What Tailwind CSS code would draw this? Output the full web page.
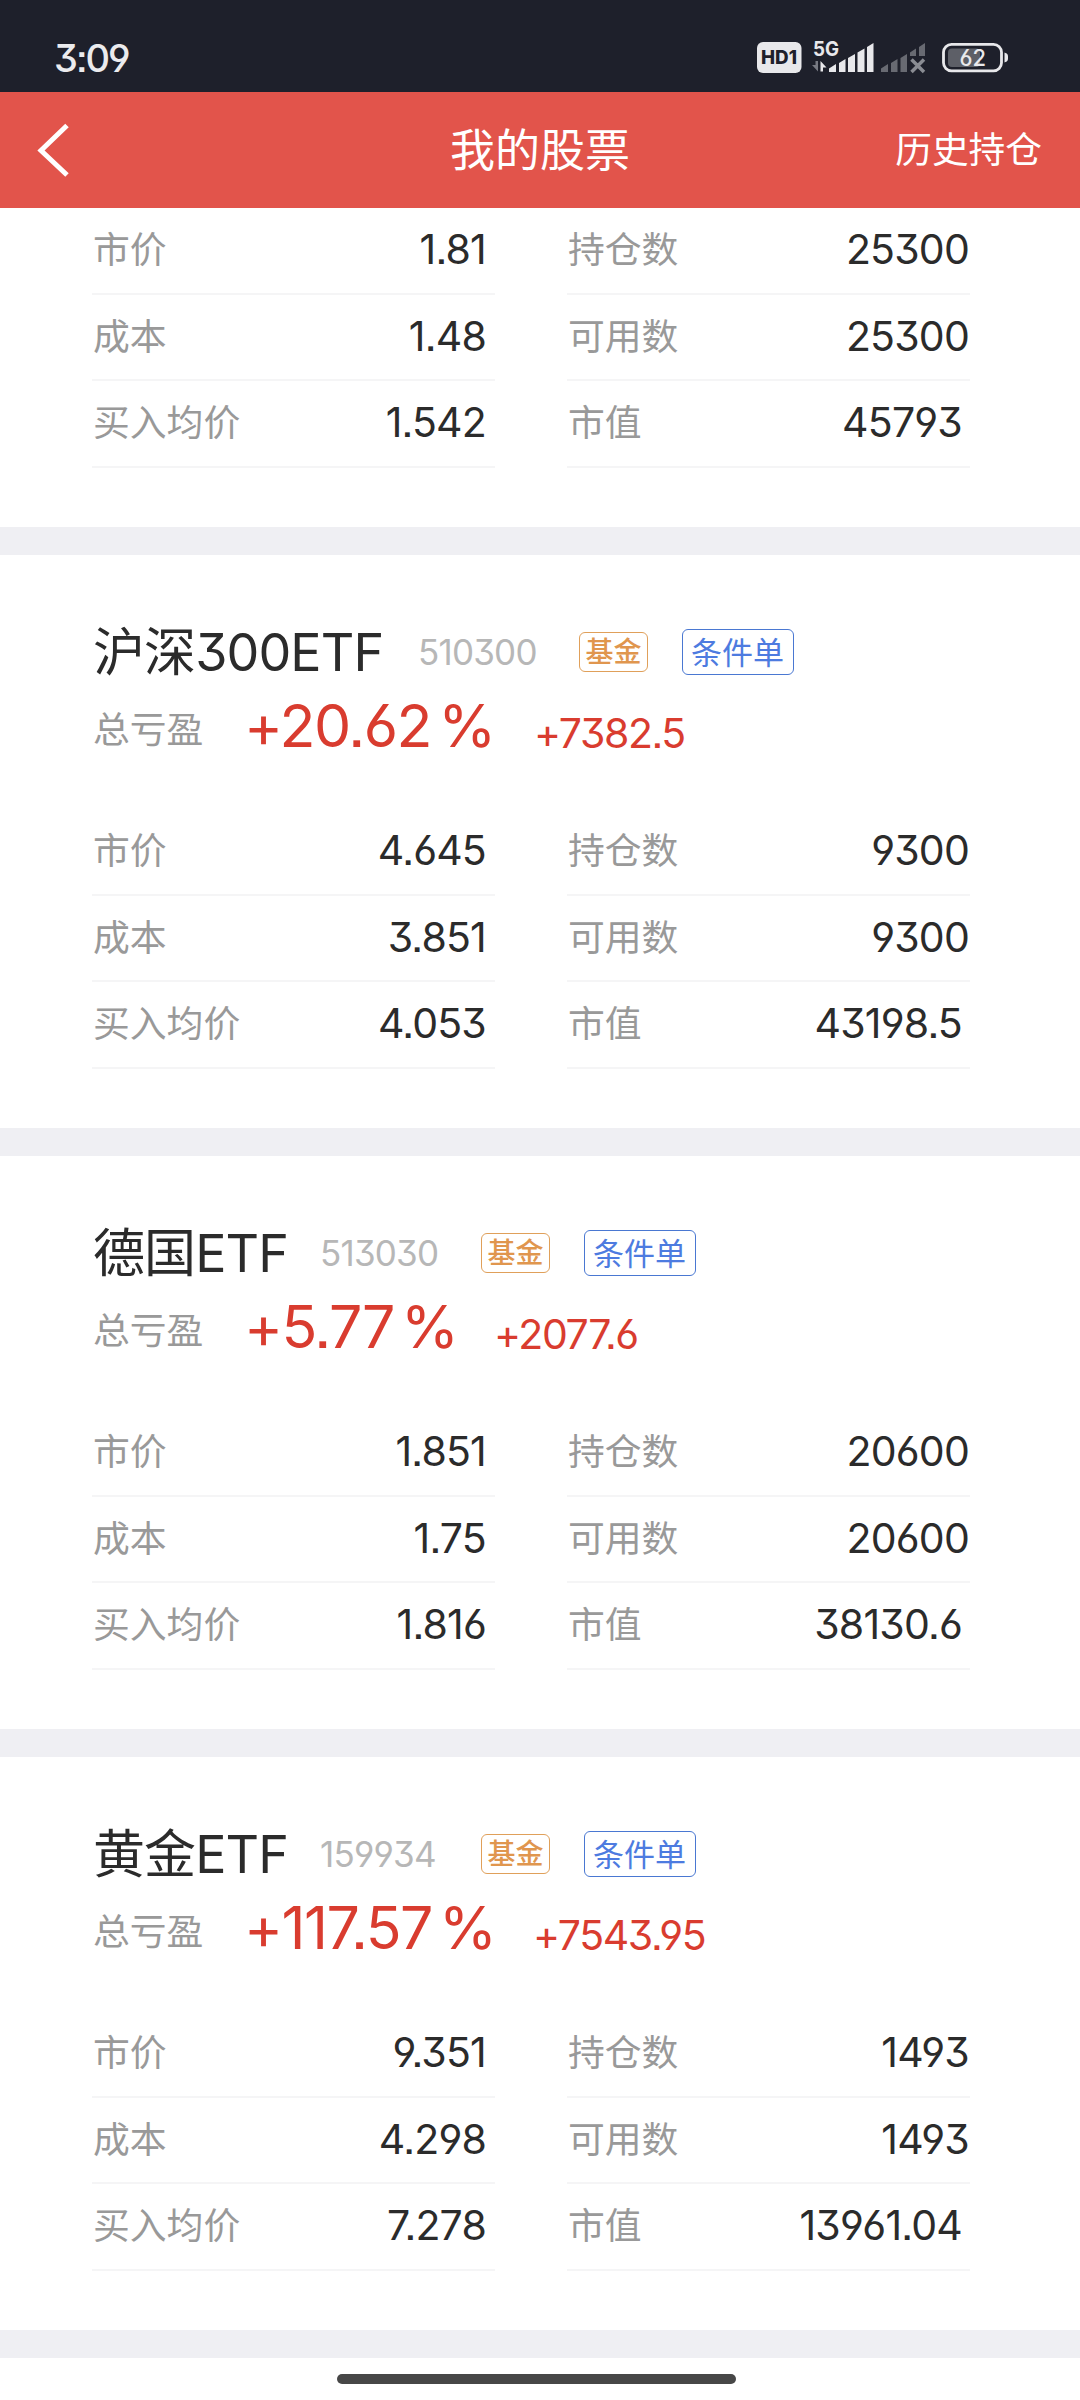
<!DOCTYPE html>
<html lang="zh-CN">
<head>
    <meta charset="UTF-8">
    <meta name="viewport" content="width=device-width, initial-scale=1.0">
    <title>我的股票</title>
    <script src="https://cdn.jsdelivr.net/npm/@tailwindcss/browser@4"></script>
</head>
<body class="w-[1080px] h-[2400px] overflow-hidden bg-white text-[#2b2b2b] font-[Inter,'Noto_Sans_CJK_SC',sans-serif] [font-feature-settings:'cv03','cv04','cv09','ss07']">
    <div class="relative flex flex-col h-[2400px]">
        <!-- status bar -->
        <div class="h-[92px] shrink-0 bg-[#1e202b] flex justify-between pl-[54px]">
            <span class="mt-[36px] leading-[44px] text-[38px] font-medium tracking-[-2px] text-[#ebebee]">3:09</span>
            <svg class="w-[330px] h-[92px]" viewBox="750 0 330 92" fill="#e8e8eb">
                <rect x="757" y="42" width="44.500" height="31" rx="6"/>
                <text x="761" y="64" font-size="19" font-weight="800" fill="#1e202b" textLength="36" lengthAdjust="spacingAndGlyphs">HD1</text>
                <text x="813" y="56" font-size="20" font-weight="700" textLength="26" lengthAdjust="spacingAndGlyphs">5G</text>
                <path d="M815.500 61h2.500v10.500l-6-6.500h3.500z" fill="#777982"/>
                <path d="M820.500 71.500V61l6 6.500h-3.500v4z"/>
                <path d="M829 72v-3.500l7-4.500v8zM839 72V63l6.500-4v13zM848 72V58l7-4v18zM857.500 72V52.500l7-4v23.500zM867 72V47l6.500-4v29z"/>
                <g fill="#686a72">
                    <path d="M881 72v-3.500l7-4.500v8zM891 72V63l6.500-4v13zM900.500 72V58l6.500-4v18zM910 56v-3.500l6-4V56zM919 56V47l6-4v13z"/>
                    <path d="M911.500 59.500l12.500 12.500M924 59.500l-12.500 12.500" stroke="#8a8c93" stroke-width="3.500"/>
                </g>
                <rect x="948" y="48.500" width="32" height="18.500" rx="4" fill="#5d5f67"/>
                <rect x="943.500" y="44.300" width="58" height="26.500" rx="8" fill="none" stroke="#e8e8eb" stroke-width="2.800"/>
                <path d="M1004.500 52.500c3 1 3.500 2 3.500 5s-.5 4-3.500 5z"/>
                <text x="959.500" y="66" font-size="22.500" font-weight="500" textLength="26.500" lengthAdjust="spacingAndGlyphs">62</text>
            </svg>
        </div>

        <!-- title bar -->
        <div class="h-[116px] shrink-0 bg-[#e2544b] text-white grid grid-cols-[1fr_auto_1fr] items-center pl-[37px] pr-[38px]">
            <svg class="w-[33px] h-[54px]" viewBox="0 0 33 54" fill="none" stroke="#fff" stroke-width="5">
                <path d="M30 2.500L4 27.500L30 52"/>
            </svg>
            <h1 class="pl-[1px] pt-[1px] text-[45px] leading-[60px]">我的股票</h1>
            <span class="justify-self-end text-[36.7px] leading-[50px]">历史持仓</span>
        </div>

        <div id="stock-list"></div>

        <!-- home indicator -->
        <div class="absolute left-[337px] top-[2374px] w-[399px] h-[10px] rounded-full bg-[#474747]"></div>
    </div>

    <script>
        const stocks = [
            { price: '1.81', cost: '1.48', avg: '1.542', hold: '25300', usable: '25300', value: '45793' },
            { name: '沪深300ETF', code: '510300', rate: '+20.62 %', profit: '+7382.5', price: '4.645', cost: '3.851', avg: '4.053', hold: '9300', usable: '9300', value: '43198.5', nameW: 'w-[325px]', rateW: 'w-[290px]' },
            { name: '德国ETF', code: '513030', rate: '+5.77 %', profit: '+2077.6', price: '1.851', cost: '1.75', avg: '1.816', hold: '20600', usable: '20600', value: '38130.6', nameW: 'w-[227px]', rateW: 'w-[250px]' },
            { name: '黄金ETF', code: '159934', rate: '+117.57 %', profit: '+7543.95', price: '9.351', cost: '4.298', avg: '7.278', hold: '1493', usable: '1493', value: '13961.04', nameW: 'w-[227px]', rateW: 'w-[289px]' }
        ];

        function row(label, value, height, pad) {
            return `
                <div class="${height} ${pad} flex items-center justify-between border-b-2 border-[#f5f5f6] pb-[1px]">
                    <span class="text-[36.8px] text-[#999]">${label}</span>
                    <span class="text-[41px] tracking-[-0.8px]">${value}</span>
                </div>`;
        }

        function header(s) {
            return `
                <div class="pt-[65px] pl-[93px] h-[254px]">
                    <div class="flex items-center h-[64px] whitespace-nowrap">
                        <span class="${s.nameW} pt-[2px] text-[52px] tracking-[-0.9px]">${s.name}</span>
                        <span class="w-[161px] text-[35px] tracking-[-0.8px] text-[#b7b7b7]">${s.code}</span>
                        <span class="w-[69px] h-[40px] flex items-center justify-center border-[1.5px] border-[#e0a05a] rounded-[6px] text-[28px] leading-none font-medium text-[#e0964e]">基金</span>
                        <span class="ml-[34px] w-[112px] h-[46px] flex items-center justify-center border-[1.5px] border-[#4a78d2] rounded-[6px] pr-[1px] text-[31px] leading-none text-[#4d7be0]">条件单</span>
                    </div>
                    <div class="flex items-baseline h-[76px] whitespace-nowrap text-[#d93c2f]">
                        <span class="relative -top-[4px] w-[151px] text-[36.8px] text-[#999]">总亏盈</span>
                        <span class="${s.rateW} text-[59px] leading-[83px] tracking-[-1.5px] [word-spacing:-8px]">${s.rate}</span>
                        <span class="relative top-[1px] text-[41px] tracking-[-1.4px]">${s.profit}</span>
                    </div>
                </div>`;
        }

        document.getElementById('stock-list').innerHTML = stocks.map(s => `
            <section class="border-b-[28px] border-[#efeff3]">
                ${s.name ? header(s) : ''}
                <div class="flex gap-[72px] pl-[92px] pb-[59px]">
                    <div class="w-[403px]">
                        ${row('市价', s.price, 'h-[87px]', 'pl-[1px] pr-[9px]')}
                        ${row('成本', s.cost, 'h-[86px]', 'pl-[1px] pr-[9px]')}
                        ${row('买入均价', s.avg, 'h-[87px]', 'pl-[1px] pr-[9px]')}
                    </div>
                    <div class="w-[403px]">
                        ${row('持仓数', s.hold, 'h-[87px]', 'pl-[1px] pr-[1px]')}
                        ${row('可用数', s.usable, 'h-[86px]', 'pl-[1px] pr-[1px]')}
                        ${row('市值', s.value, 'h-[87px]', 'pl-[1px] pr-[8px]')}
                    </div>
                </div>
            </section>`).join('');
    </script>
</body>
</html>
